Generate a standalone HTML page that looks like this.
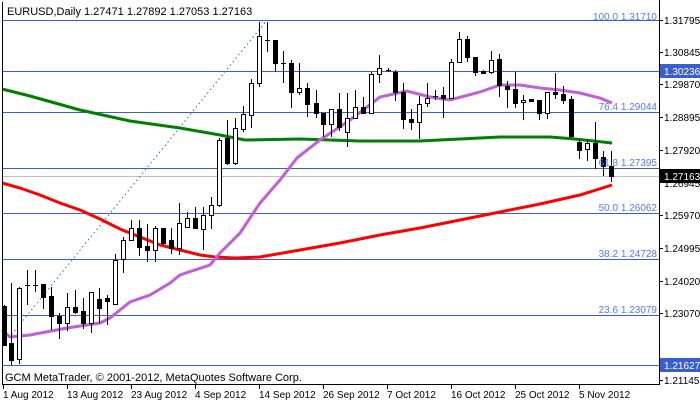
<!DOCTYPE html>
<html><head><meta charset="utf-8"><style>
html,body{margin:0;padding:0;background:#fff;width:700px;height:402px;overflow:hidden}
svg{display:block;font-family:"Liberation Sans",sans-serif}
</style></head><body>
<svg id="c" width="700" height="402" viewBox="0 0 700 402" xmlns="http://www.w3.org/2000/svg">
<rect width="700" height="402" fill="#fff"/>
<g stroke="#3a5fcd" stroke-width="1" shape-rendering="crispEdges">
<line x1="2" y1="20.5" x2="659" y2="20.5"/>
<line x1="2" y1="71.5" x2="659" y2="71.5"/>
<line x1="2" y1="112.5" x2="659" y2="112.5"/>
<line x1="2" y1="168.5" x2="659" y2="168.5"/>
<line x1="2" y1="213.5" x2="659" y2="213.5"/>
<line x1="2" y1="259.5" x2="659" y2="259.5"/>
<line x1="2" y1="315.5" x2="659" y2="315.5"/>
<line x1="2" y1="365.5" x2="659" y2="365.5"/>
</g>
<line x1="2" y1="176.5" x2="659" y2="176.5" stroke="#c0c0c0" shape-rendering="crispEdges"/>
<line x1="3" y1="345" x2="267" y2="20" stroke="#3a5fcd" stroke-dasharray="1.5,3"/>
<polyline fill="none" stroke="#008000" stroke-width="3" points="2,89 30,96 80,110 130,121 180,128 220,135 245,140 300,139 360,141 420,141 460,139 500,137 550,137 575,139 612,143"/>
<polyline fill="none" stroke="#ff0000" stroke-width="3" points="2,183 20,188 40,195 60,203 80,210 100,219 120,229 140,237 160,245 180,250 200,255 215,257 235,258 260,257 300,250 340,243 380,235 420,228 460,220 500,212 540,204 580,195 612,185"/>
<polyline fill="none" stroke="#c060d8" stroke-width="3" points="2,330 10,337 30,335 67,328 100,323 110,318 130,302 150,295 170,283 180,275 210,265 220,253 240,233 260,203 280,180 297,158 320,140 350,120 380,97 407,91 430,97 450,100 480,92 500,85 520,85 540,88 560,90 580,93 600,98 612,103"/>
<g id="cand" shape-rendering="crispEdges"></g>
<g font-size="10" fill="#5577ee" text-anchor="end">
<text x="657" y="20">100.0 1.31710</text>
<text x="657" y="110">76.4 1.29044</text>
<text x="657" y="166">61.8 1.27395</text>
<text x="657" y="211">50.0 1.26062</text>
<text x="657" y="257">38.2 1.24728</text>
<text x="657" y="313">23.6 1.23079</text>
</g>
<line x1="659.5" y1="0" x2="659.5" y2="385" stroke="#000" shape-rendering="crispEdges"/>
<line x1="2.5" y1="2" x2="2.5" y2="385" stroke="#000" shape-rendering="crispEdges"/>
<line x1="2" y1="384.5" x2="660" y2="384.5" stroke="#000" shape-rendering="crispEdges"/>
<g font-size="10" fill="#000">
<text x="664" y="24">1.31795</text>
<text x="664" y="56">1.30845</text>
<text x="664" y="88">1.29870</text>
<text x="664" y="121">1.28895</text>
<text x="664" y="154">1.27920</text>
<text x="664" y="187">1.26945</text>
<text x="664" y="219">1.25970</text>
<text x="664" y="252">1.24995</text>
<text x="664" y="285">1.24020</text>
<text x="664" y="317">1.23070</text>
<text x="664" y="384">1.21145</text>
</g>
<g stroke="#000" shape-rendering="crispEdges">
<line x1="659" y1="20.5" x2="663" y2="20.5"/><line x1="659" y1="52.5" x2="663" y2="52.5"/><line x1="659" y1="84.5" x2="663" y2="84.5"/><line x1="659" y1="117.5" x2="663" y2="117.5"/><line x1="659" y1="150.5" x2="663" y2="150.5"/><line x1="659" y1="215.5" x2="663" y2="215.5"/><line x1="659" y1="248.5" x2="663" y2="248.5"/><line x1="659" y1="281.5" x2="663" y2="281.5"/><line x1="659" y1="313.5" x2="663" y2="313.5"/><line x1="659" y1="380.5" x2="663" y2="380.5"/>
</g>
<rect x="660" y="64" width="40" height="14" fill="#3a5fcd"/>
<text x="664" y="75" font-size="10" fill="#fff">1.30236</text>
<rect x="660" y="169" width="40" height="14" fill="#000"/>
<text x="664" y="180" font-size="10" fill="#fff">1.27163</text>
<rect x="660" y="358" width="40" height="14" fill="#3a5fcd"/>
<text x="664" y="369" font-size="10" fill="#fff">1.21627</text>
<g stroke="#000" shape-rendering="crispEdges">
<line x1="3.5" y1="385" x2="3.5" y2="389"/><line x1="67.5" y1="385" x2="67.5" y2="389"/><line x1="131.5" y1="385" x2="131.5" y2="389"/><line x1="195.5" y1="385" x2="195.5" y2="389"/><line x1="259.5" y1="385" x2="259.5" y2="389"/><line x1="323.5" y1="385" x2="323.5" y2="389"/><line x1="387.5" y1="385" x2="387.5" y2="389"/><line x1="451.5" y1="385" x2="451.5" y2="389"/><line x1="515.5" y1="385" x2="515.5" y2="389"/><line x1="579.5" y1="385" x2="579.5" y2="389"/>
</g>
<g font-size="10" fill="#000">
<text x="3" y="398">1 Aug 2012</text><text x="67" y="398">13 Aug 2012</text><text x="131" y="398">23 Aug 2012</text><text x="195" y="398">4 Sep 2012</text><text x="259" y="398">14 Sep 2012</text><text x="323" y="398">26 Sep 2012</text><text x="387" y="398">7 Oct 2012</text><text x="451" y="398">16 Oct 2012</text><text x="515" y="398">25 Oct 2012</text><text x="579" y="398">5 Nov 2012</text>
</g>
<text x="7" y="15" font-size="11" fill="#000">EURUSD,Daily  1.27471 1.27892 1.27053 1.27163</text>
<text x="5" y="381" font-size="11" fill="#000">GCM MetaTrader, © 2001-2012, MetaQuotes Software Corp.</text>
</svg>
<script>
// x, bull(1)/bear(0), bodyTop, bodyBottom, high, low
var d=[
[4,0,306,345,305,346],[11,0,343,360,283,365],[19,1,288,359,287,364],[27,2,285,285,270,305],[35,2,285,285,270,292],
[43,0,284,297,284,309],[51,0,296,316,287,330],[59,0,316,323,313,339],[67,1,307,323,293,331],[75,0,307,312,290,314],
[83,0,311,323,298,329],[91,1,292,323,292,333],[99,0,299,308,288,323],[107,0,298,301,295,325],[115,1,260,304,254,305],
[123,1,240,259,237,273],[131,1,228,240,220,241],[139,0,228,247,220,256],[147,0,246,250,224,262],[155,1,228,250,226,262],
[163,0,228,243,228,245],[171,0,240,248,228,254],[179,1,223,248,203,255],[187,1,218,227,212,228],[195,0,218,228,207,229],
[203,1,215,229,207,250],[211,1,205,215,197,229],[219,1,140,205,138,207],[227,0,138,163,120,165],[235,1,128,163,118,165],
[243,1,114,129,106,132],[251,1,83,115,79,128],[259,1,36,83,22,87],[267,2,40,40,22,52],[275,0,40,63,40,72],
[283,2,63,63,51,83],[291,0,63,92,60,108],[299,1,88,92,63,95],[307,0,88,104,83,117],[316,0,103,113,90,118],
[323,0,113,124,113,137],[331,1,109,124,109,137],[339,0,109,127,93,131],[347,1,118,132,93,147],[355,1,107,118,90,118],
[363,0,107,113,97,113],[371,1,74,113,72,113],[379,1,68,74,55,83],[388,2,70,70,68,72],[395,0,72,92,70,101],
[403,0,92,119,83,129],[411,0,119,122,109,130],[419,1,104,122,96,139],[427,1,98,103,83,107],[435,2,96,96,90,100],
[443,0,95,98,87,118],[451,1,62,98,59,99],[459,1,39,62,32,63],[467,0,39,57,36,62],[475,0,57,72,57,76],
[483,0,71,73,70,74],[491,1,60,72,51,74],[499,0,59,85,54,97],[507,0,86,89,81,108],[515,0,89,103,72,108],
[523,1,100,102,95,120],[531,0,99,101,99,101],[539,0,100,113,100,120],[547,1,92,113,92,119],[555,0,92,94,73,99],
[563,0,94,100,86,104],[571,0,99,136,96,138],[579,0,142,150,139,159],[587,1,143,149,139,161],[595,0,143,158,122,169],
[603,0,157,166,151,176],[611,0,166,176,151,182]];
var g=document.getElementById('cand'),s='';
d.forEach(function(c){var x=c[0];
s+='<line x1="'+(x+.5)+'" y1="'+c[4]+'" x2="'+(x+.5)+'" y2="'+c[5]+'" stroke="#000"/>';
if(c[1]==2){s+='<line x1="'+(x-2)+'" y1="'+(c[2]+.5)+'" x2="'+(x+3)+'" y2="'+(c[2]+.5)+'" stroke="#000"/>';}
else{var h=Math.max(c[3]-c[2],1);
s+='<rect x="'+(x-2+.5)+'" y="'+(c[2]+.5)+'" width="4" height="'+h+'" fill="'+(c[1]?'#fff':'#000')+'" stroke="#000"/>';}
});
g.innerHTML=s;
</script>
</body></html>
